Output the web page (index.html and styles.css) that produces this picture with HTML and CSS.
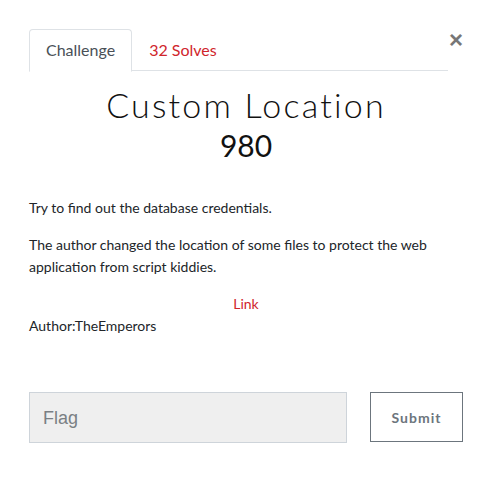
FILE: index.html
```html
<!DOCTYPE html>
<html>
<head>
<meta charset="utf-8">
<link rel="stylesheet" href="styles.css">
</head>
<body>
<div class="modal">
  <div class="top">
    <nav class="tabs">
      <span class="tab active">Challenge</span>
      <span class="tab solves">32 Solves</span>
    </nav>
    <span class="close">×</span>
  </div>
  <h2 class="title">Custom Location</h2>
  <h3 class="value">980</h3>
  <div class="desc">
    <p>Try to find out the database credentials.</p>
    <p>The author changed the location of some files to protect the web application from script kiddies.</p>
    <p class="link"><a>Link</a></p>
    <p class="author">Author:TheEmperors</p>
  </div>
  <form class="submit-row">
    <input class="flag" type="text" placeholder="Flag">
    <button class="btn" type="button">Submit</button>
  </form>
</div>
</body>
</html>
```
FILE: styles.css
```css
html, body { margin: 0; background: #fff; }
body { font-family: Lato, "Open Sans", sans-serif; color: #212529; }
.modal { padding: 29px 29px 0 29px; width: 434px; }
.top { display: flex; align-items: flex-start; }
.tabs { display: flex; flex: 0 0 419px; border-bottom: 1px solid #dee2e6; height: 41px; }
.tab { font-size: 16px; line-height: 24px; padding: 8px 16px 9px 16px; border: 1px solid transparent; border-radius: 4px 4px 0 0; }
.tab.active { color: #495057; border-color: #dee2e6 #dee2e6 #fff; background: #fff; height: 24px; }
.tab.solves { color: #d0252c; }
.close { margin-left: 1px; font-family: "Liberation Sans", sans-serif; font-size: 24px; font-weight: bold; color: #777; line-height: 20px; margin-top: 1px; }
.title { margin: 14px 0 0; text-align: center; font-weight: 300; font-size: 34px; letter-spacing: 2.2px; line-height: 40px; color: #111; }
.value { margin: 3px 0 0; text-align: center; font-weight: 400; font-size: 30px; line-height: 34px; color: #111; }
.desc { margin-top: 35px; font-size: 14px; line-height: 22px; color: #212529; }
.desc p { margin: 0 0 15px; }
.link { text-align: center; margin-bottom: 0 !important; }
.link a { color: #d0252c; }
.submit-row { display: flex; justify-content: space-between; align-items: flex-start; margin-top: 55px; }
.flag { width: 318px; height: 51px; box-sizing: border-box; border: 1px solid #ced4da; background: #efefef; padding: 2px 13px 0; font-family: "Liberation Sans", sans-serif; font-size: 18px; color: #495057; }
.flag::placeholder { color: #7a7f84; }
.btn { width: 93px; height: 50px; box-sizing: border-box; border: 1px solid #6c757d; background: #fff; font-family: Lato, sans-serif; font-weight: 700; font-size: 14px; letter-spacing: 1px; color: #6c757d; }
```
